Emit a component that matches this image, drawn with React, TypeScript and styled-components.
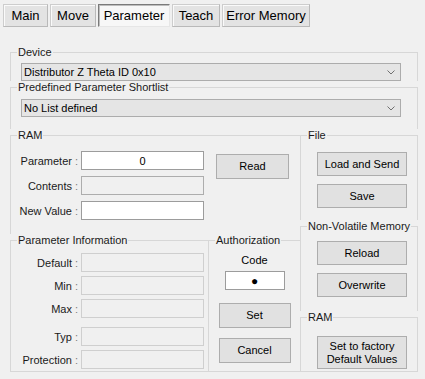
import React from 'react';
import styled, { createGlobalStyle } from 'styled-components';

const GlobalStyle = createGlobalStyle`
    * { box-sizing: border-box; }
    body {
        margin: 0;
        background: #f0f0f0;
        font-family: "Liberation Sans", Arial, sans-serif;
        font-size: 11px;
        color: #000;
    }
`;

const LINE = '#d7d7d7';

const tabs = [
    { label: 'Main', width: 45 },
    { label: 'Move', width: 46 },
    { label: 'Parameter', width: 72, active: true },
    { label: 'Teach', width: 48 },
    { label: 'Error Memory', width: 88 },
];

const Chevron = () => (
    <svg width="8" height="5" viewBox="0 0 8 5">
        <polyline points="0.5,0.5 4,4 7.5,0.5" fill="none" stroke="#707070" strokeWidth="1" />
    </svg>
);

const Select = ({ value }: { value: string }) => (
    <SelectBox>
        <span>{value}</span>
        <Chevron />
    </SelectBox>
);

const Field = ({ label, value, kind }: { label: string; value?: string; kind: 'edit' | 'readonly' | 'disabled' }) => (
    <>
        <Label>
            {label} <Colon>:</Colon>
        </Label>
        <Input $kind={kind}>{value}</Input>
    </>
);

export default function App() {
    return (
        <>
            <GlobalStyle />
            <TabBar>
                {tabs.map((t) => (
                    <Tab key={t.label} $width={t.width} $active={!!t.active}>
                        {t.label}
                    </Tab>
                ))}
            </TabBar>
            <Frame>
                <Group $right>
                    <Legend>Device</Legend>
                    <SelectRow $top={4} $bottom={0}>
                        <Select value="Distributor Z Theta ID 0x10" />
                    </SelectRow>
                </Group>
                <Group $right>
                    <Legend>Predefined Parameter Shortlist</Legend>
                    <SelectRow $top={5} $bottom={12}>
                        <Select value="No List defined" />
                    </SelectRow>
                </Group>
                <Lower>
                    <LeftColumn>
                        <Group>
                            <Legend>RAM</Legend>
                            <RamGrid>
                                <Field label="Parameter" value="0" kind="edit" />
                                <ReadSlot>
                                    <Button $w={73}>Read</Button>
                                </ReadSlot>
                                <Field label="Contents" kind="readonly" />
                                <Field label="New Value" kind="edit" />
                            </RamGrid>
                        </Group>
                        <BottomRow>
                            <Group $width={198}>
                                <Legend>Parameter Information</Legend>
                                <InfoGrid>
                                    <Field label="Default" kind="disabled" />
                                    <Field label="Min" kind="disabled" />
                                    <Field label="Max" kind="disabled" />
                                    <Field label="Typ" kind="disabled" />
                                    <Field label="Protection" kind="disabled" />
                                </InfoGrid>
                            </Group>
                            <Group $grow>
                                <Legend>Authorization</Legend>
                                <AuthBody>
                                    <CodeLabel>Code</CodeLabel>
                                    <CodeInput>●</CodeInput>
                                    <Button $w={72} $mt={13}>Set</Button>
                                    <Button $w={72} $mt={10}>Cancel</Button>
                                </AuthBody>
                            </Group>
                        </BottomRow>
                    </LeftColumn>
                    <RightColumn>
                        <Group $right>
                            <Legend>File</Legend>
                            <ButtonStack $top={10} $bottom={12}>
                                <Button $w={90} $h={24}>Load and Send</Button>
                                <Button $w={90} $h={24}>Save</Button>
                            </ButtonStack>
                        </Group>
                        <Group $right>
                            <Legend>Non-Volatile Memory</Legend>
                            <ButtonStack $top={8} $bottom={14}>
                                <Button $w={90} $h={24}>Reload</Button>
                                <Button $w={90} $h={24}>Overwrite</Button>
                            </ButtonStack>
                        </Group>
                        <Group $right $grow>
                            <Legend>RAM</Legend>
                            <ButtonStack $top={12} $bottom={2}>
                                <Button $w={90} $h={33}>
                                    Set to factory
                                    <br />
                                    Default Values
                                </Button>
                            </ButtonStack>
                        </Group>
                    </RightColumn>
                </Lower>
            </Frame>
        </>
    );
}

// Styled Components
const TabBar = styled.div`
    display: flex;
    gap: 2px;
    padding: 4px 0 0 3px;
`;

const Tab = styled.div<{ $width: number; $active: boolean }>`
    width: ${(p) => p.$width}px;
    height: 23px;
    display: flex;
    align-items: center;
    justify-content: center;
    font-size: 13px;
    background: ${(p) => (p.$active ? '#f7f7f7' : '#e3e3e3')};
    border: 1px solid;
    border-color: ${(p) => (p.$active ? '#7a7a7a #e6e6e6 #e6e6e6 #7a7a7a' : '#cdcdcd #b9b9b9 #b9b9b9 #cdcdcd')};
    box-shadow: ${(p) => (p.$active ? 'inset 1px 1px 0 #bdbdbd' : 'inset 1px 1px 0 #fafafa')};
`;

const Frame = styled.div`
    margin: 19px 0 0 10px;
    width: 408px;
`;

const Group = styled.fieldset<{ $right?: boolean; $width?: number; $grow?: boolean }>`
    margin: 0;
    padding: 0;
    min-width: 0;
    border: none;
    border-top: 1px solid ${LINE};
    border-left: 1px solid ${LINE};
    border-right: ${(p) => (p.$right ? `1px solid ${LINE}` : 'none')};
    width: ${(p) => (p.$width ? `${p.$width}px` : 'auto')};
    flex: ${(p) => (p.$grow ? '1' : 'none')};
    display: flex;
    flex-direction: column;
`;

const Legend = styled.legend`
    margin-left: 6px;
    padding: 0 1px;
    font-size: 11px;
    line-height: 13px;
    color: #1a1a1a;
`;

const SelectRow = styled.div<{ $top: number; $bottom: number }>`
    padding: ${(p) => p.$top}px 16px ${(p) => p.$bottom}px 10px;
`;

const SelectBox = styled.div`
    height: 18px;
    display: flex;
    align-items: center;
    justify-content: space-between;
    padding: 0 5px 0 2px;
    background: #e5e5e5;
    border: 1px solid #acacac;
`;

const Lower = styled.div`
    display: flex;
    border-bottom: 1px solid ${LINE};
`;

const LeftColumn = styled.div`
    width: 290px;
    display: flex;
    flex-direction: column;
`;

const RightColumn = styled.div`
    flex: 1;
    display: flex;
    flex-direction: column;
`;

const BottomRow = styled.div`
    display: flex;
    flex: 1;
`;

const RamGrid = styled.div`
    display: grid;
    grid-template-columns: 67px 123px auto;
    grid-auto-rows: 19px;
    column-gap: 3px;
    row-gap: 6px;
    padding: 9px 0 14px 0;
`;

const ReadSlot = styled.div`
    grid-column: 3;
    grid-row: 1 / span 2;
    padding: 3px 0 0 9px;
`;

const InfoGrid = styled.div`
    display: grid;
    grid-template-columns: 67px 123px;
    grid-template-rows: 19px 19px 19px 24px 19px;
    column-gap: 3px;
    row-gap: 4px;
    padding: 6px 0 1px 0;
`;

const Label = styled.div`
    grid-column: 1;
    align-self: end;
    height: 19px;
    display: flex;
    align-items: center;
    justify-content: flex-end;
    gap: 3px;
    white-space: nowrap;
    color: #1a1a1a;
`;

const Colon = styled.span`
    color: #7d7d7d;
`;

const Input = styled.div<{ $kind: 'edit' | 'readonly' | 'disabled' }>`
    grid-column: 2;
    align-self: end;
    height: 19px;
    display: flex;
    align-items: center;
    justify-content: center;
    background: ${(p) => (p.$kind === 'edit' ? '#ffffff' : '#f0f0f0')};
    border: 1px solid ${(p) => (p.$kind === 'edit' ? '#9c9c9c' : p.$kind === 'readonly' ? '#adadad' : '#cfcfcf')};
`;

const AuthBody = styled.div`
    display: flex;
    flex-direction: column;
    align-items: center;
    padding-top: 7px;
    flex: 1;
`;

const CodeLabel = styled.div`
    line-height: 13px;
`;

const CodeInput = styled.div`
    margin-top: 4px;
    width: 60px;
    height: 19px;
    display: flex;
    align-items: center;
    justify-content: center;
    font-size: 12px;
    background: #fff;
    border: 1px solid #9c9c9c;
`;

const ButtonStack = styled.div<{ $top: number; $bottom: number }>`
    display: flex;
    flex-direction: column;
    gap: 8px;
    padding: ${(p) => p.$top}px 0 ${(p) => p.$bottom}px 16px;
`;

const Button = styled.div<{ $w: number; $h?: number; $mt?: number }>`
    width: ${(p) => p.$w}px;
    height: ${(p) => p.$h || 25}px;
    margin-top: ${(p) => p.$mt || 0}px;
    display: flex;
    align-items: center;
    justify-content: center;
    text-align: center;
    line-height: 13px;
    background: #e1e1e1;
    border: 1px solid #adadad;
`;
